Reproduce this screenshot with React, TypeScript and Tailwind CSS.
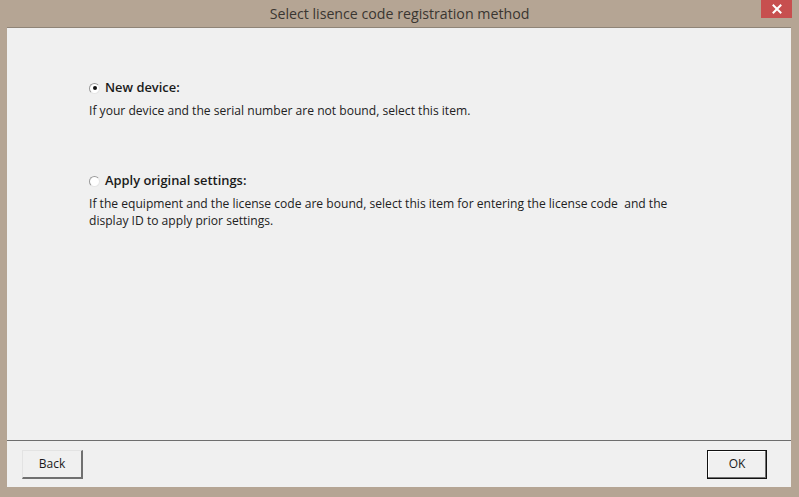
import React, { useState } from 'react';

const font = { fontFamily: '"Open Sans", "Noto Sans", "Liberation Sans", sans-serif' };

function Radio({ checked, onClick }: { checked: boolean; onClick: () => void }) {
  return (
    <button
      type="button"
      onClick={onClick}
      className="w-[11px] h-[11px] rounded-full border border-t-[#9a9a9a] border-l-[#9a9a9a] border-r-[#e6e6e6] border-b-[#e6e6e6] bg-white flex items-center justify-center shrink-0"
    >
      {checked && <span className="w-[4px] h-[4px] rounded-full bg-[#111]" />}
    </button>
  );
}

const options = [
  {
    key: 'new',
    title: 'New device:',
    lines: ['If your device and the serial number are not bound, select this item.'],
  },
  {
    key: 'apply',
    title: 'Apply original settings:',
    lines: [
      'If the equipment and the license code are bound, select this item for entering the license code  and the',
      'display ID to apply prior settings.',
    ],
  },
];

export default function App() {
  const [selected, setSelected] = useState('new');

  return (
    <div className="w-[799px] h-[497px] bg-[#b5a594] flex flex-col overflow-hidden" style={font}>
      {/* Title bar */}
      <div className="h-[27px] flex items-start shrink-0">
        <div className="w-[761px] h-[27px] flex items-center justify-center text-[14.2px] text-[#3a3631] pl-[38px]">
          Select lisence code registration method
        </div>
        <div className="w-[31px] h-[18px] bg-[#c74f4f] flex items-center justify-center text-white">
          <svg width="10" height="10" viewBox="0 0 10 10">
            <path d="M1.5 1.5 L8.5 8.5 M8.5 1.5 L1.5 8.5" stroke="#fff" strokeWidth="2" strokeLinecap="square" />
          </svg>
        </div>
      </div>

      {/* Client area */}
      <div className="flex-1 ml-[7px] mr-[8px] mb-[10px] bg-[#f0f0f0] border-t border-[#8f8477] flex flex-col">
        <div className="flex-1 pl-[82px] pt-[50px]">
          {options.map((opt, i) => (
            <div key={opt.key} className={i === 0 ? 'mb-[52px]' : ''}>
              <div className="flex items-center gap-[5px] h-[20px]">
                <Radio checked={selected === opt.key} onClick={() => setSelected(opt.key)} />
                <span
                  className="text-[12.9px] font-semibold text-[#1a1a1a] cursor-default"
                  onClick={() => setSelected(opt.key)}
                >
                  {opt.title}
                </span>
              </div>
              <div className="mt-[4px] text-[12.1px] leading-[17px] text-[#222]">
                {opt.lines.map((l) => (
                  <div key={l} className="whitespace-pre">{l}</div>
                ))}
              </div>
            </div>
          ))}
        </div>

        {/* Footer */}
        <div className="h-[47px] border-t border-[#6e6e6e] flex items-center justify-between pl-[15px] pr-[24px] shrink-0">
          <button
            type="button"
            className="w-[61px] h-[29px] bg-[#f0f0f0] border-t border-l border-[#e3e3e3] border-r-2 border-b-2 border-r-[#707070] border-b-[#707070] text-[12px] text-[#1a1a1a]"
          >
            Back
          </button>
          <button
            type="button"
            className="w-[60px] h-[29px] bg-[#f0f0f0] border border-[#111] shadow-[inset_-1px_-1px_0_#707070,inset_1px_1px_0_#ffffff] text-[12px] text-[#1a1a1a]"
          >
            OK
          </button>
        </div>
      </div>
    </div>
  );
}
